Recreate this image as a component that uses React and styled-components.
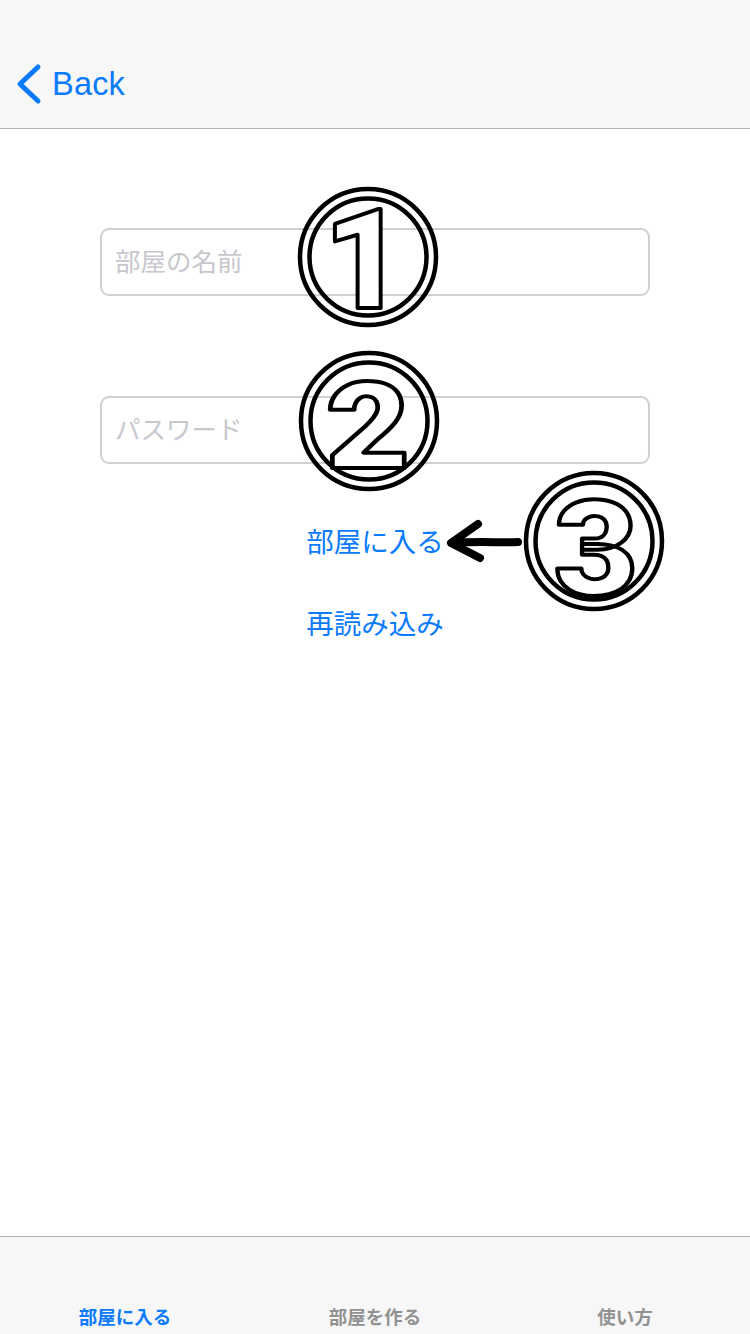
import React from "react"
import styled, { createGlobalStyle } from "styled-components"

const FONT = `"Liberation Sans", "Noto Sans CJK JP", sans-serif`
const BLUE = "#0a7aff"

const GlobalStyle = createGlobalStyle`
    html, body {
        margin: 0;
        padding: 0;
        background: #ffffff;
        font-family: ${FONT};
    }
`

const Back = () => (
    <BackButton>
        <svg width="30" height="44" viewBox="0 0 30 44">
            <path d="M24 5 L6 22 L24 39" fill="none" stroke={BLUE} strokeWidth="5" strokeLinecap="round" strokeLinejoin="round" />
        </svg>
        <BackLabel>Back</BackLabel>
    </BackButton>
)

const Mark = ({ x, y, digit, size, dx = 0, dy = 50, width }) => (
    <MarkSvg $x={x} $y={y} width="146" height="146" viewBox="0 0 146 146">
        <circle cx="73" cy="73" r="68" fill="none" stroke="#000" strokeWidth="4.5" />
        <circle cx="73" cy="73" r="58.5" fill="none" stroke="#000" strokeWidth="4.5" />
        <Digit
            x={73 + dx}
            y={73 + dy}
            $size={size}
            textLength={width}
            lengthAdjust={width ? "spacingAndGlyphs" : undefined}
        >
            {digit}
        </Digit>
    </MarkSvg>
)

const Arrow = () => (
    <ArrowSvg width="84" height="56" viewBox="0 0 84 56">
        <path d="M78 29 C 60 30, 40 28, 12 30" fill="none" stroke="#000" strokeWidth="8" strokeLinecap="round" />
        <path d="M38 11 L11 30 L40 45" fill="none" stroke="#000" strokeWidth="8" strokeLinecap="round" strokeLinejoin="round" />
    </ArrowSvg>
)

const App = () => {
    return (
        <Page>
            <GlobalStyle />
            <NavBar>
                <Back />
            </NavBar>
            <Main>
                <Field placeholder="部屋の名前" />
                <Field placeholder="パスワード" type="text" />
                <LinkButton $top="59px">部屋に入る</LinkButton>
                <LinkButton $top="42px">再読み込み</LinkButton>
            </Main>
            <TabBar>
                <Tab $active>部屋に入る</Tab>
                <Tab>部屋を作る</Tab>
                <Tab>使い方</Tab>
            </TabBar>

            <Mark x={295} y={184} digit="1" size={140} dx={-4} dy={51} />
            <Mark x={296} y={348} digit="2" size={121} dx={-1} dy={47} width={84} />
            <Mark x={521} y={468} digit="3" size={131} dx={2} dy={54} width={84} />
            <Arrow />
        </Page>
    )
}

const Page = styled.div`
    position: relative;
    display: flex;
    flex-direction: column;
    width: 750px;
    height: 1334px;
    overflow: hidden;
    background: #ffffff;
`

const NavBar = styled.header`
    display: flex;
    align-items: center;
    height: 88px;
    padding: 40px 0 0 14px;
    background: #f7f7f7;
    border-bottom: 1px solid #b2b2b2;
`

const BackButton = styled.div`
    display: flex;
    align-items: center;
    gap: 8px;
`

const BackLabel = styled.span`
    font-size: 32.5px;
    line-height: 40px;
    color: ${BLUE};
    letter-spacing: 0.2px;
`

const Main = styled.main`
    flex: 1;
    display: flex;
    flex-direction: column;
    align-items: center;
    padding-top: 99px;
`

const Field = styled.input`
    box-sizing: border-box;
    width: 550px;
    height: 68px;
    margin-bottom: 100px;
    padding: 0 13px;
    border: 2px solid #d0d0d0;
    border-radius: 9px;
    background: #fff;
    font-family: ${FONT};
    font-size: 25.5px;
    color: #333;
    outline: none;

    &:last-of-type {
        margin-bottom: 0;
    }

    &::placeholder {
        color: #c7c7cd;
    }
`

const LinkButton = styled.div`
    margin-top: ${(p) => p.$top};
    font-size: 27.5px;
    line-height: 40px;
    color: ${BLUE};
`

const TabBar = styled.nav`
    display: grid;
    grid-template-columns: repeat(3, 1fr);
    align-items: end;
    height: 98px;
    padding-bottom: 4px;
    box-sizing: border-box;
    background: #f7f7f7;
    border-top: 1px solid #b2b2b2;
`

const Tab = styled.div`
    text-align: center;
    font-size: 18.5px;
    font-weight: 700;
    line-height: 24px;
    color: ${(p) => (p.$active ? BLUE : "#929292")};
`

const MarkSvg = styled.svg`
    position: absolute;
    left: ${(p) => p.$x}px;
    top: ${(p) => p.$y}px;
    overflow: visible;
`

const Digit = styled.text`
    font-family: Roboto, "Liberation Sans", sans-serif;
    font-weight: 900;
    font-size: ${(p) => p.$size}px;
    text-anchor: middle;
    fill: #ffffff;
    stroke: #000000;
    stroke-width: 4px;
    stroke-linejoin: round;
`

const ArrowSvg = styled.svg`
    position: absolute;
    left: 440px;
    top: 513px;
`

export default App
